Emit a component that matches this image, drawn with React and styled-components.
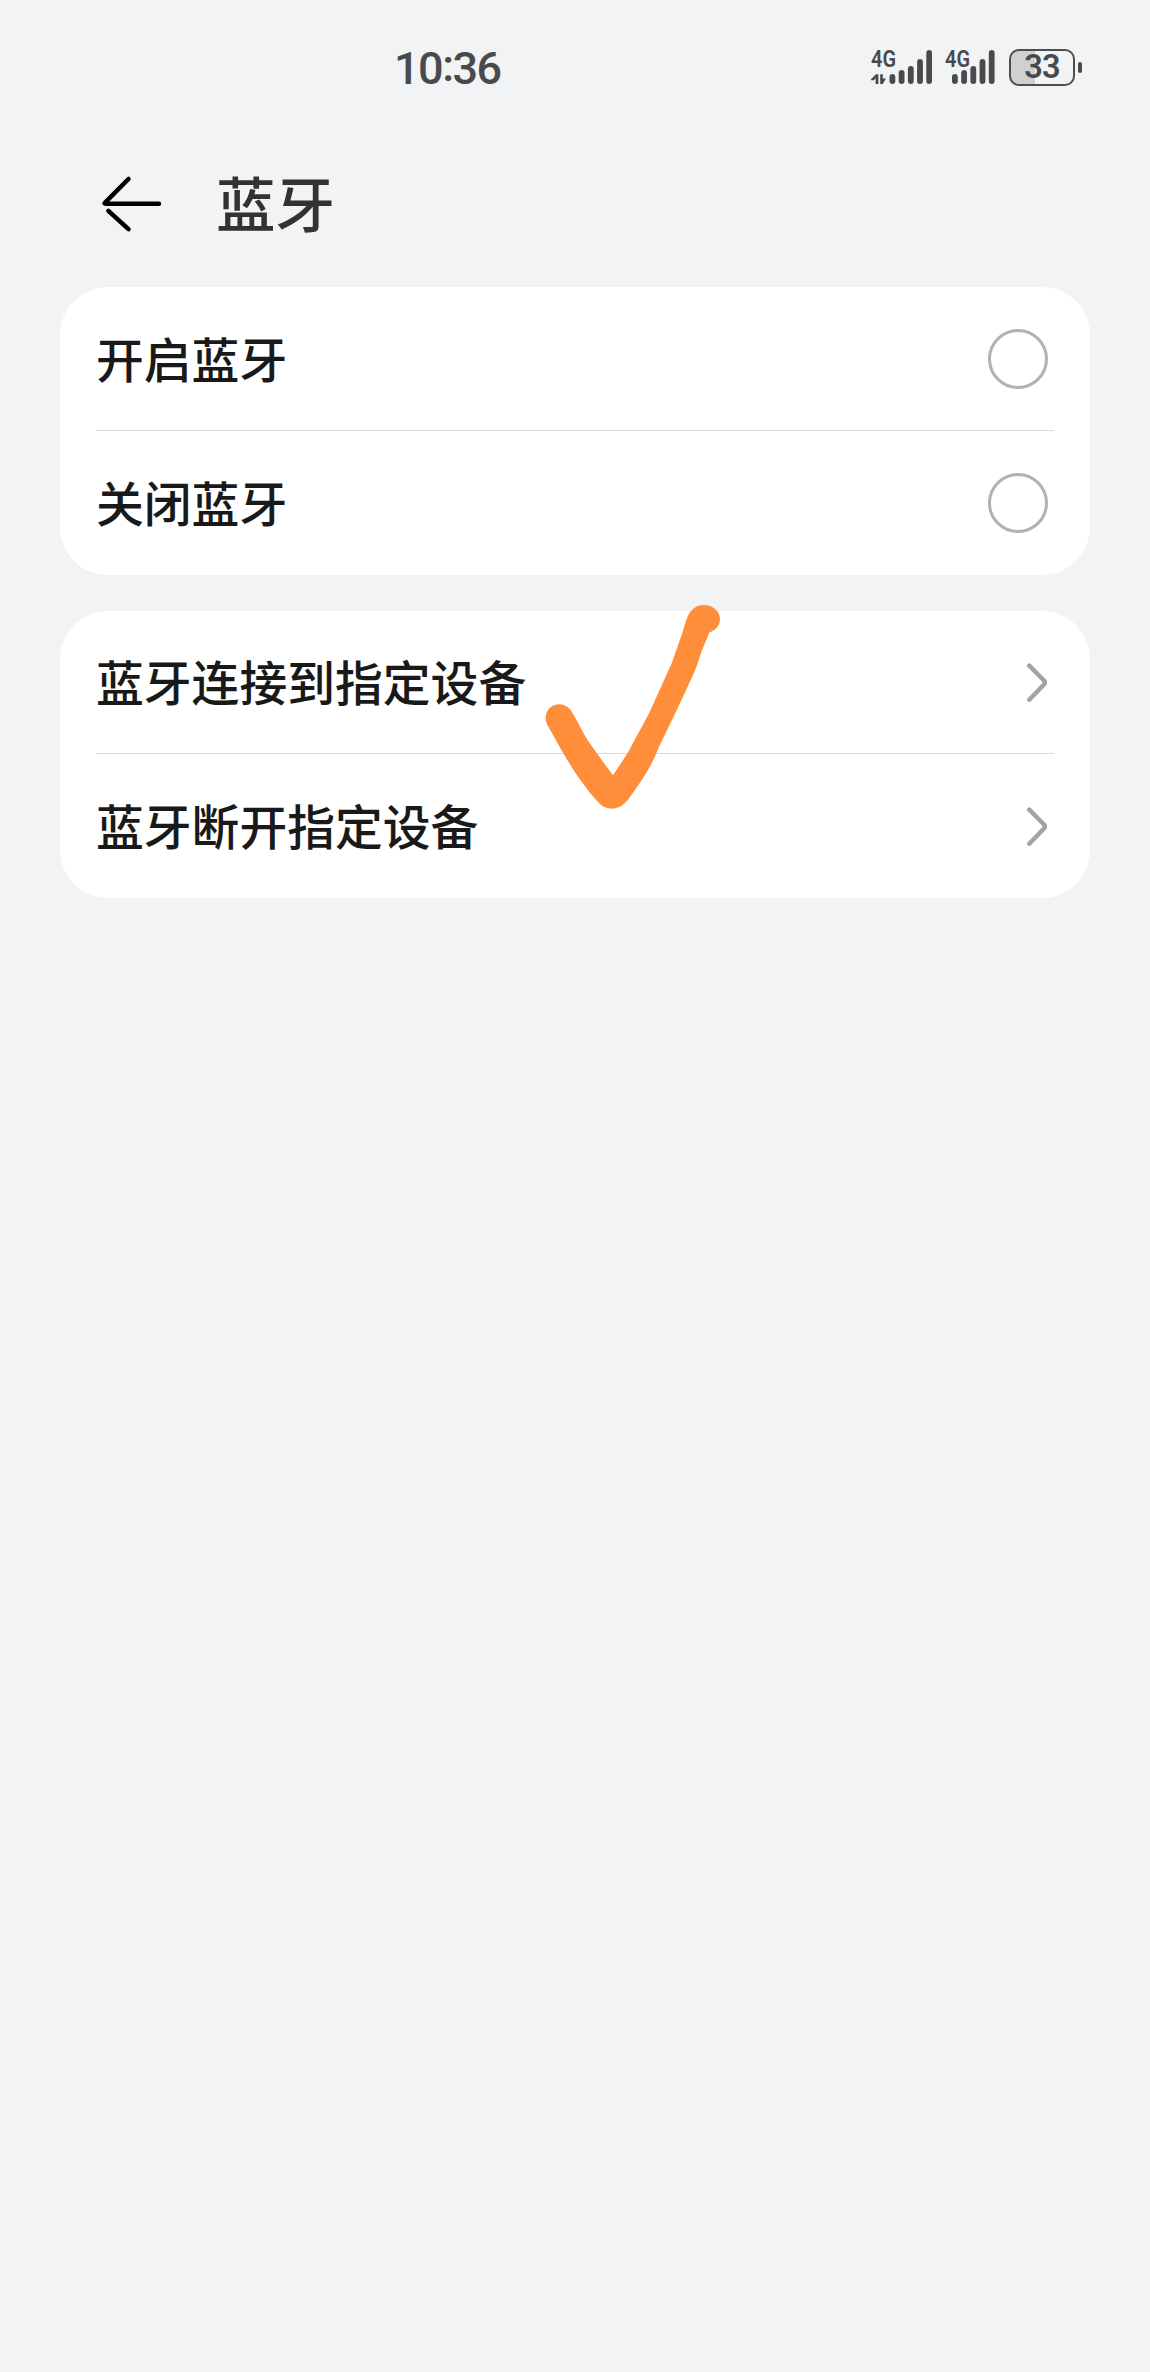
import React from 'react';
import styled, {createGlobalStyle} from 'styled-components';

const GlobalStyle = createGlobalStyle`
  * {
    box-sizing: border-box;
  }
  body {
    margin: 0;
    background: #f2f3f5;
    font-family: 'Noto Sans CJK SC', sans-serif;
  }
`;

const Screen = styled.div`
  min-height: 2372px;
  background: #f2f3f5;
`;
const StatusBar = styled.div`
  display: flex;
  justify-content: space-between;
  align-items: center;
  height: 135px;
  padding: 0 68px 0 394px;
  color: #494a4b;
`;
const Clock = styled.div`
  padding-top: 2px;
  font-family: Roboto, sans-serif;
  font-size: 45px;
  font-weight: 500;
  line-height: 60px;
  letter-spacing: -1.5px;
`;
const Colon = styled.span`
  vertical-align: 3px;
  line-height: 1;
`;
const StatusIcons = styled.div`
  display: flex;
  align-items: center;
`;
const SignalIcon = styled.svg`
  display: block;
  width: ${props => props.$width}px;
  height: 52px;
  margin-right: ${props => props.$gap}px;
  fill: #494a4b;
  font-family: Roboto, sans-serif;
  font-weight: 600;
`;
const Battery = styled.div`
  display: flex;
  align-items: center;
  gap: 3px;
`;
const BatteryBody = styled.div`
  display: flex;
  justify-content: center;
  align-items: center;
  width: 66px;
  height: 37px;
  border: 2px solid #4d4e4f;
  border-radius: 10px;
  background: linear-gradient(
    to right,
    #cfd0d1 ${props => props.$level + 6}%,
    transparent ${props => props.$level + 6}%
  );
  font-family: Roboto, sans-serif;
  font-size: 32.5px;
  font-weight: 600;
  line-height: 33px;
  letter-spacing: -0.8px;
`;
const BatteryTip = styled.div`
  width: 4px;
  height: 11px;
  border-radius: 2px;
  background: #494a4b;
`;
const Header = styled.header`
  display: flex;
  align-items: center;
  height: 137px;
  padding-left: 100px;
`;
const BackIcon = styled.svg`
  display: block;
  width: 64px;
  height: 60px;
  margin-right: 52px;
  fill: none;
  stroke: #000;
  stroke-width: 4.5;
  stroke-linecap: round;
  stroke-linejoin: round;
`;
const Title = styled.h1`
  margin: 0;
  padding-bottom: 5px;
  color: #303233;
  font-size: 59.5px;
  font-weight: 500;
  line-height: 80px;
`;
const Content = styled.main`
  display: flex;
  flex-direction: column;
  gap: 36px;
  padding: 15px 60px 0;
`;
const Card = styled.section`
  position: relative;
  padding: 0 36px;
  border-radius: 48px;
  background: #fff;
`;
const Row = styled.div`
  display: flex;
  justify-content: space-between;
  align-items: center;
  height: 143.8px;
  padding-right: 6px;

  & + & {
    box-shadow: 0 -1px 0 #d9dadb;
  }
`;
const RowLabel = styled.span`
  padding-bottom: 2px;
  color: #191919;
  font-size: 47.8px;
  font-weight: 500;
  line-height: 70px;
`;
const Radio = styled.span`
  width: 60px;
  height: 60px;
  border: 3px solid #b2b2b2;
  border-radius: 50%;
`;
const ChevronIcon = styled.svg`
  display: block;
  width: 22px;
  height: 40px;
  fill: none;
  stroke: #a3a3a3;
  stroke-width: 4.5;
  stroke-linecap: round;
  stroke-linejoin: round;
`;
const CheckMark = styled.svg`
  position: absolute;
  top: -21px;
  left: 460px;
  width: 220px;
  height: 240px;
  fill: #ff8d39;
`;

const barTops = [24, 20, 16, 9, 0];

const Signal = ({start, width, gap, data}) => (
  <SignalIcon $width={width} $gap={gap} viewBox={`0 -8 ${width} 52`}>
    <text x="0" y="17.3" fontSize="23" textLength="25" lengthAdjust="spacingAndGlyphs">
      4G
    </text>
    {data && (
      <path d="M0 29.2L5 24.2H7.4V34H4.6V28.6L2.8 30.3H0ZM9.2 24.2H11.8V28.5H15L11.8 34H9.2Z" />
    )}
    {barTops.map((top, i) => (
      <rect
        key={top}
        x={start + i * 9.2}
        y={top}
        width="5.8"
        height={34 - top}
        rx="2.9"
      />
    ))}
  </SignalIcon>
);

const Chevron = () => (
  <ChevronIcon viewBox="0 0 22 40">
    <path d="M3.3 3.7L18 18.5Q19.6 20.5 18 22.5L3.3 37.7" />
  </ChevronIcon>
);

const App = () => {
  const toggles = ['开启蓝牙', '关闭蓝牙'];
  const links = ['蓝牙连接到指定设备', '蓝牙断开指定设备'];
  return (
    <Screen>
      <GlobalStyle />
      <StatusBar>
        <Clock>
          10<Colon>:</Colon>36
        </Clock>
        <StatusIcons>
          <Signal start={18.5} width={61} gap={13} data />
          <Signal start={7} width={50} gap={14} />
          <Battery>
            <BatteryBody $level={33}>33</BatteryBody>
            <BatteryTip />
          </Battery>
        </StatusIcons>
      </StatusBar>
      <Header>
        <BackIcon viewBox="0 0 64 60">
          <path d="M28.5 5L4.8 28.8Q3.8 29.7 5.5 29.7H59M8.4 36.8L28.5 55.2" />
        </BackIcon>
        <Title>蓝牙</Title>
      </Header>
      <Content>
        <Card>
          {toggles.map(name => (
            <Row key={name}>
              <RowLabel>{name}</RowLabel>
              <Radio />
            </Row>
          ))}
        </Card>
        <Card>
          {links.map(name => (
            <Row key={name}>
              <RowLabel>{name}</RowLabel>
              <Chevron />
            </Row>
          ))}
          <CheckMark viewBox="0 0 660 720">
            <path d="M77 384C77 360 96 343 118 343C136 343 150 354 157 368C175 398 190 430 205 454C230 490 255 524 279 556C296 530 315 503 330 476C345 446 365 412 388 368L455 220C467 185 478 155 484 138C490 120 494 102 502 82C512 58 530 45 550 45C580 45 600 64 600 88C600 106 588 122 568 127C560 150 545 180 538 205C528 240 505 285 480 340L415 475C395 530 360 580 325 628C312 645 296 655 278 656C260 656 248 650 240 642C200 600 165 550 130 490C113 460 100 435 85 410C80 402 77 394 77 384Z" />
          </CheckMark>
        </Card>
      </Content>
    </Screen>
  );
};

export default App;
